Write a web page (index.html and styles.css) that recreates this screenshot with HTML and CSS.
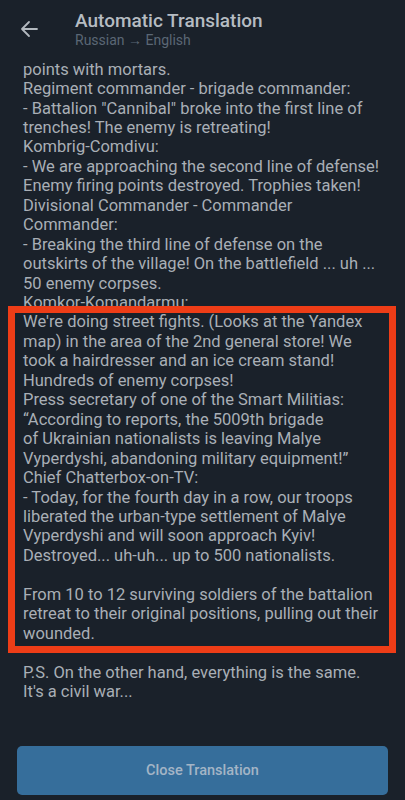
FILE: index.html
```html
<!DOCTYPE html>
<html lang="en">
<head>
<meta charset="utf-8">
<title>Automatic Translation</title>
<link rel="stylesheet" href="styles.css">
</head>
<body>
<div class="screen">
  <header class="header">
    <button class="back" aria-label="Back">
      <svg width="24" height="24" viewBox="0 0 24 24"><path d="M20 12H5M12 5l-7 7 7 7" fill="none" stroke="currentColor" stroke-width="1.8" stroke-linecap="round" stroke-linejoin="round"/></svg>
    </button>
    <div class="titles">
      <div class="title">Automatic Translation</div>
      <div class="subtitle">Russian → English</div>
    </div>
  </header>
  <main class="content">
    <div class="text">
      points with mortars.<br>
      Regiment commander - brigade commander:<br>
      - Battalion "Cannibal" broke into the first line of<br>
      trenches! The enemy is retreating!<br>
      Kombrig-Comdivu:<br>
      - We are approaching the second line of defense!<br>
      Enemy firing points destroyed. Trophies taken!<br>
      Divisional Commander - Commander<br>
      Commander:<br>
      - Breaking the third line of defense on the<br>
      outskirts of the village! On the battlefield ... uh ...<br>
      50 enemy corpses.<br>
      Komkor-Komandarmu:
      <div class="highlight">
        We're doing street fights. (Looks at the Yandex<br>
        map) in the area of the 2nd general store! We<br>
        took a hairdresser and an ice cream stand!<br>
        Hundreds of enemy corpses!<br>
        Press secretary of one of the Smart Militias:<br>
        “According to reports, the 5009th brigade<br>
        of Ukrainian nationalists is leaving Malye<br>
        Vyperdyshi, abandoning military equipment!”<br>
        Chief Chatterbox-on-TV:<br>
        - Today, for the fourth day in a row, our troops<br>
        liberated the urban-type settlement of Malye<br>
        Vyperdyshi and will soon approach Kyiv!<br>
        Destroyed... uh-uh... up to 500 nationalists.<br>
        <br>
        From 10 to 12 surviving soldiers of the battalion<br>
        retreat to their original positions, pulling out their<br>
        wounded.
      </div>
      <br>
      P.S. On the other hand, everything is the same.<br>
      It's a civil war...
    </div>
  </main>
  <footer class="footer">
    <button class="close">Close Translation</button>
  </footer>
</div>
</body>
</html>
```

FILE: styles.css
```css
* { box-sizing: border-box; }
html, body { margin: 0; padding: 0; }
body {
  background: #1a212a;
  font-family: Roboto, "Noto Sans", sans-serif;
}
.screen {
  height: 800px;
  display: flex;
  flex-direction: column;
  overflow: hidden;
}
.header {
  height: 57px;
  flex: none;
  display: flex;
  align-items: flex-start;
  padding-top: 10px;
}
.back {
  background: none;
  border: 0;
  padding: 0;
  margin: 7px 0 0 17px;
  width: 24px;
  height: 24px;
  color: #b2b8be;
  display: flex;
}
.titles {
  margin-left: 34px;
  display: flex;
  flex-direction: column;
  gap: 1px;
}
.title {
  font-size: 19px;
  line-height: 21px;
  font-weight: 500;
  color: #b6bcc2;
}
.subtitle {
  font-size: 14px;
  line-height: 16px;
  color: #5b6775;
}
.content {
  flex: 1;
  overflow: hidden;
}
.text {
  margin-top: 2.6px;
  padding: 0 9px 0 23px;
  font-size: 16.5px;
  line-height: 19.45px;
  color: #a9afb6;
  white-space: nowrap;
}
.highlight {
  position: relative;
}
.highlight::after {
  content: "";
  position: absolute;
  left: -15px;
  right: 0;
  top: -6px;
  bottom: -10px;
  border: 7px solid #ee3d17;
  pointer-events: none;
}
.footer {
  flex: none;
  padding: 0 17px 5px;
}
.close {
  width: 100%;
  height: 49px;
  border: 0;
  border-radius: 5px;
  background: #366e9b;
  color: #a4b5c6;
  font-family: Roboto, "Noto Sans", sans-serif;
  font-size: 14.5px;
  font-weight: 500;
}
```
